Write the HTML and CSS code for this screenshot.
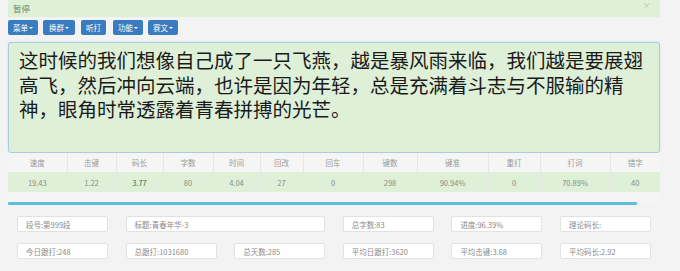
FILE: index.html
```html
<!DOCTYPE html>
<html lang="zh">
<head>
<meta charset="utf-8">
<link rel="stylesheet" href="styles.css">
</head>
<body>
<div class="page">
  <div class="alert">
    <span class="alert-text">暂停</span>
    <span class="close">×</span>
  </div>
  <div class="toolbar">
    <span class="btn b1">菜单<i class="caret"></i></span>
    <span class="btn b2">换群 <i class="caret"></i></span>
    <span class="btn b3">听打</span>
    <span class="btn b4">功能<i class="caret"></i></span>
    <span class="btn b5">赛文<i class="caret"></i></span>
  </div>
  <div class="text-area">这时候的我们想像自己成了一只飞燕，越是暴风雨来临，我们越是要展翅高飞，然后冲向云端，也许是因为年轻，总是充满着斗志与不服输的精神，眼角时常透露着青春拼搏的光芒。</div>
  <table class="stats">
    <colgroup>
      <col class="w59"><col class="w49"><col class="w47"><col class="w50"><col class="w47"><col class="w43">
      <col class="w60"><col class="w54"><col class="w71"><col class="w52"><col class="w70"><col class="w50">
    </colgroup>
    <tr class="head">
      <td>速度</td><td>击键</td><td>码长</td><td>字数</td><td>时间</td><td>回改</td>
      <td>回车</td><td>键数</td><td>键准</td><td>重打</td><td>打词</td><td>错字</td>
    </tr>
    <tr class="data">
      <td>19.43</td><td>1.22</td><td class="hl">3.77</td><td>80</td><td>4.04</td><td>27</td>
      <td>0</td><td>298</td><td>90.94%</td><td>0</td><td>70.89%</td><td>40</td>
    </tr>
  </table>
  <div class="spacer"></div>
  <div class="progress"><div class="bar"></div></div>
  <div class="info">
    <div class="box">段号:第999段</div>
    <div class="box wide">标题:青春年华-3</div>
    <div class="box">总字数:83</div>
    <div class="box">进度:96.39%</div>
    <div class="box">理论码长:</div>
    <div class="box">今日跟打:248</div>
    <div class="box">总跟打:1031680</div>
    <div class="box">总天数:285</div>
    <div class="box">平均日跟打:3620</div>
    <div class="box">平均击键:3.68</div>
    <div class="box">平均码长:2.92</div>
  </div>
</div>
</body>
</html>
```

FILE: styles.css
```css
* { box-sizing: border-box; }
html, body { margin: 0; padding: 0; }
body {
  background: #f3f3f3;
  font-family: "Noto Sans CJK SC", "Noto Sans", sans-serif;
  width: 680px;
  height: 271px;
  overflow: hidden;
}
.page {
  width: 652px;
  margin-left: 8px;
}
.alert {
  height: 17px;
  background: #dff0d8;
  display: flex;
  align-items: center;
  justify-content: space-between;
  padding: 0 9px 2px 5px;
}
.alert-text {
  font-size: 8.5px;
  color: #6d8a63;
}
.close {
  font-size: 9px;
  color: #b9c9b4;
  line-height: 9px;
  margin-top: -5px;
}
.toolbar {
  display: flex;
  height: 15px;
  margin-top: 3px;
}
.btn {
  background: #3a7cc0;
  color: #fff;
  font-size: 7.5px;
  height: 15px;
  border-radius: 2px;
  display: flex;
  align-items: center;
  justify-content: center;
}
.b1 { width: 30px; }
.b2 { width: 32px; margin-left: 5px; }
.b3 { width: 25px; margin-left: 6px; }
.b4 { width: 30px; margin-left: 7px; }
.b5 { width: 30px; margin-left: 5px; }
.caret {
  display: inline-block;
  width: 0;
  height: 0;
  border-left: 2px solid transparent;
  border-right: 2px solid transparent;
  border-top: 2px solid #fff;
  margin-left: 1px;
  margin-top: 1px;
}
.text-area {
  margin-top: 7px;
  height: 111px;
  background: #dff0d8;
  border: 1px solid #a9cbe3;
  border-radius: 3px;
  padding: 5px 10px 0 10px;
  font-size: 19.5px;
  line-height: 24.5px;
  color: #1a1a1a;
  box-shadow: 0 0 2px rgba(102, 175, 233, 0.35);
}
.stats {
  width: 652px;
  table-layout: fixed;
  border-collapse: collapse;
  font-size: 7.5px;
  text-align: center;
}
.stats td {
  border-left: 1px solid #e6e6e6;
  padding: 0;
}
.stats td:first-child { border-left: none; }
.head td {
  height: 19px;
  background: #f5f5f5;
  color: #9a9a9a;
}
.data td {
  height: 20px;
  background: #dff0d8;
  color: #858f82;
}
.data td.hl { color: #3c763d; }
.w59 { width: 59px; }
.w49 { width: 49px; }
.w47 { width: 47px; }
.w50 { width: 50px; }
.w43 { width: 43px; }
.w60 { width: 60px; }
.w54 { width: 54px; }
.w71 { width: 71px; }
.w52 { width: 52px; }
.w70 { width: 70px; }
.spacer {
  height: 10px;
  background: #f5f5f5;
}
.progress {
  height: 4px;
  width: 629px;
}
.bar {
  height: 3px;
  background: #5bc0de;
  border-radius: 1px;
}
.info {
  margin-left: 9px;
  margin-top: 10px;
  display: grid;
  grid-template-columns: repeat(6, 91px);
  column-gap: 17.6px;
  row-gap: 11px;
}
.box {
  height: 16px;
  background: #fff;
  border: 1px solid #e2e2e2;
  border-radius: 2px;
  font-size: 7.5px;
  color: #8a8a8a;
  display: flex;
  align-items: center;
  padding-left: 8px;
  white-space: nowrap;
}
.wide { grid-column: span 2; }
```
